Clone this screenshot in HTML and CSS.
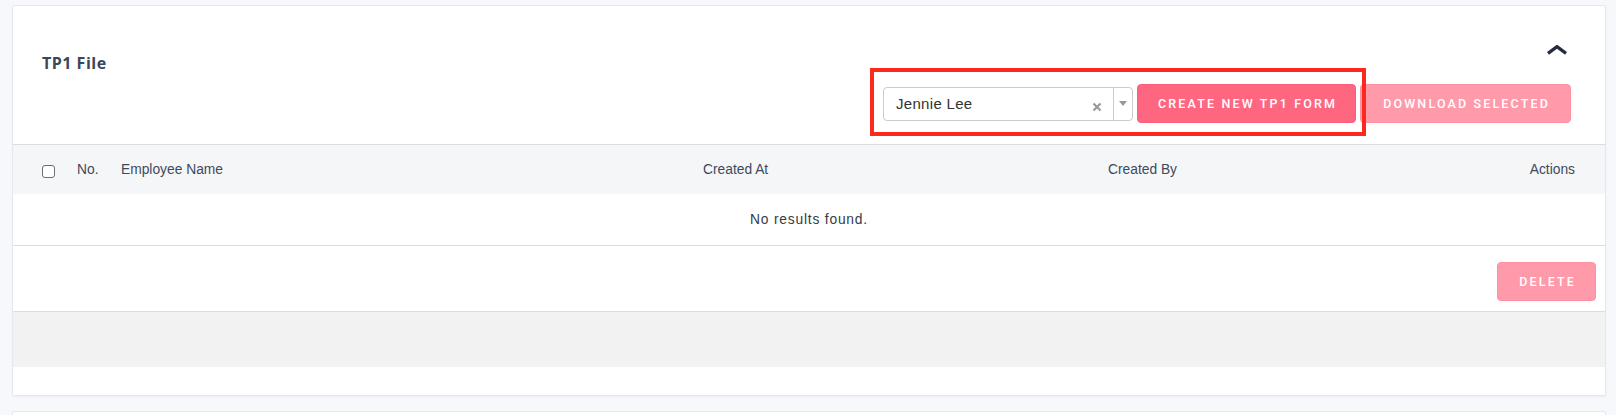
FILE: index.html
```html
<!DOCTYPE html>
<html lang="en">
<head>
<meta charset="utf-8">
<title>TP1 File</title>
<link rel="stylesheet" href="styles.css">
</head>
<body>
<div class="page">
  <section class="card">
    <div class="card-head">
      <h2 class="title">TP1 File</h2>
      <div class="head-right">
        <button class="collapse" aria-label="Collapse">
          <svg width="22" height="10" viewBox="0 0 22 10"><path d="M2 8.4 L11 1.6 L20 8.4" fill="none" stroke="#252b40" stroke-width="3.2" stroke-linejoin="miter"/></svg>
        </button>
        <div class="toolbar">
          <div class="select">
            <span class="select-value">Jennie Lee</span>
            <svg class="select-clear" width="10" height="10" viewBox="0 0 10 10"><path d="M1.5 1.5 L8.5 8.5 M8.5 1.5 L1.5 8.5" stroke="#999" stroke-width="2.2" stroke-linecap="butt"/></svg>
            <span class="select-arrow"><span class="caret"></span></span>
          </div>
          <button class="btn btn-primary">CREATE NEW TP1 FORM</button>
          <button class="btn btn-light btn-download">DOWNLOAD SELECTED</button>
          <div class="highlight"></div>
        </div>
      </div>
    </div>

    <table class="grid">
      <colgroup>
        <col class="c-check"><col class="c-no"><col class="c-name"><col class="c-at"><col class="c-by"><col class="c-act">
      </colgroup>
      <thead>
        <tr>
          <th class="th-check"><input type="checkbox" class="check"></th>
          <th>No.</th>
          <th>Employee Name</th>
          <th>Created At</th>
          <th>Created By</th>
          <th class="th-act">Actions</th>
        </tr>
      </thead>
      <tbody>
        <tr><td colspan="6" class="empty">No results found.</td></tr>
      </tbody>
    </table>

    <div class="card-foot">
      <button class="btn btn-light btn-delete">DELETE</button>
    </div>
    <div class="gray-band"></div>
    <div class="white-band"></div>
  </section>
  <section class="card card-next"></section>
</div>
</body>
</html>
```

FILE: styles.css
```css
* { box-sizing: border-box; }
html, body { margin: 0; padding: 0; }
body {
  background: #f7f8fc;
  font-family: "Liberation Sans", Arial, sans-serif;
  color: #3e4a5c;
  overflow: hidden;
}
.page { padding: 5px 10px 0 12px; }

.card {
  background: #fff;
  border: 1px solid #e7e8ee;
  border-radius: 2px;
  box-shadow: 0 1px 2px rgba(30, 40, 80, 0.05);
}
.card-next { margin-top: 15px; height: 100px; }

.card-head {
  display: flex;
  justify-content: space-between;
  align-items: flex-start;
  padding: 0 34px 21px 29px;
  border-bottom: 1px solid #dcdcdf;
}
.title {
  margin: 46px 0 0 0;
  font-family: "Open Sans", sans-serif;
  font-weight: 700;
  font-size: 16px;
  line-height: 22px;
  letter-spacing: 0.5px;
  color: #3a475b;
}
.head-right {
  display: flex;
  flex-direction: column;
  align-items: flex-end;
}
.collapse {
  margin: 39px 3px 0 0;
  padding: 0;
  border: 0;
  background: none;
  width: 22px;
  height: 10px;
  display: block;
  cursor: pointer;
}
.collapse svg { display: block; }

.toolbar {
  position: relative;
  margin-top: 29px;
  display: flex;
  align-items: center;
  gap: 4px;
}
.select {
  width: 250px;
  height: 34px;
  border: 1px solid #cccccc;
  border-radius: 4px;
  display: flex;
  align-items: center;
  background: #fff;
}
.select-value {
  flex: 1;
  padding-left: 12px;
  font-size: 15px;
  letter-spacing: 0.3px;
  color: #333;
}
.select-clear { display: block; margin-right: 11px; margin-top: 7px; }
.select-arrow {
  align-self: stretch;
  width: 19px;
  border-left: 1px solid #cccccc;
  display: flex;
  align-items: center;
  justify-content: center;
}
.caret {
  width: 0; height: 0;
  border-left: 4px solid transparent;
  border-right: 4px solid transparent;
  border-top: 5px solid #999;
}

.btn {
  height: 39px;
  padding: 0 18px 0 20px;
  border: 1px solid;
  border-radius: 4px;
  font-family: Roboto, "Liberation Sans", sans-serif;
  font-weight: 500;
  font-size: 12.5px;
  letter-spacing: 2.15px;
  color: #fff;
  cursor: pointer;
}
.btn-primary { background: #ff6781; border-color: #fb5f7a; }
.btn-light { background: #ff9aaa; border-color: #ff90a2; }
.btn.btn-download { padding: 0 20px 0 22px; }

.highlight {
  position: absolute;
  left: -13px;
  top: -16px;
  width: 496px;
  height: 68px;
  border: 4px solid #fc2a1c;
  pointer-events: none;
  z-index: 2;
}

.grid {
  width: 100%;
  border-collapse: separate;
  border-spacing: 0;
  table-layout: fixed;
  font-size: 13.8px;
}
.c-check { width: 64px; }
.c-no { width: 44px; }
.c-name { width: 582px; }
.c-at { width: 405px; }
.c-by { width: 292px; }
.c-act { width: 205px; }
.grid th {
  height: 49px;
  padding: 0;
  background: #f5f6f8;
  font-weight: normal;
  text-align: left;
  vertical-align: middle;
  color: #3e4a5c;
  white-space: nowrap;
}
.grid th.th-check { padding-left: 29px; }
.grid th.th-act { text-align: right; padding-right: 30px; }
.check {
  -webkit-appearance: none;
  appearance: none;
  display: block;
  margin: 3px 0 0 0;
  width: 13px;
  height: 13px;
  border: 1px solid #6a6e75;
  border-radius: 3px;
  background: #fff;
}
.grid td.empty {
  height: 52px;
  padding: 0;
  text-align: center;
  vertical-align: middle;
  letter-spacing: 0.8px;
  border-bottom: 1px solid #dcdcdf;
  color: #333c48;
}

.card-foot {
  display: flex;
  justify-content: flex-end;
  padding: 16px 9px 10px 0;
  border-bottom: 1px solid #dcdcdf;
}
.btn.btn-delete { padding: 0 19px 0 21px; }
.gray-band { height: 55px; background: #f2f2f2; }
.white-band { height: 28px; }
```
